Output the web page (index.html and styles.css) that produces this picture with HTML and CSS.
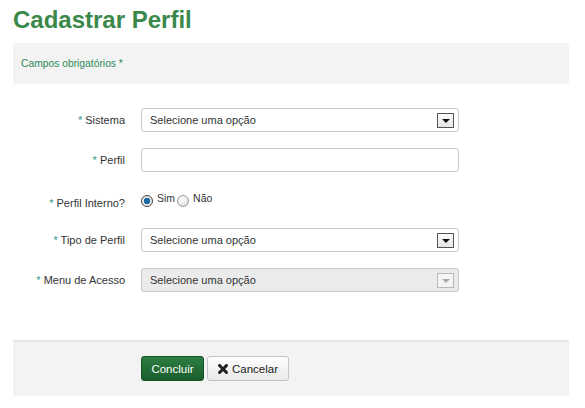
FILE: index.html
```html
<!DOCTYPE html>
<html lang="pt">
<head>
<meta charset="utf-8">
<title>Cadastrar Perfil</title>
<link rel="stylesheet" href="styles.css">
</head>
<body>
<div class="page">
  <h1 class="title">Cadastrar Perfil</h1>
  <div class="notice">Campos obrigatórios *</div>

  <form class="form">
    <div class="row">
      <label class="lbl"><span class="req">*</span> Sistema</label>
      <div class="select">
        <span class="select-text">Selecione uma opção</span>
        <span class="arrow"><span class="tri"></span></span>
      </div>
    </div>
    <div class="row">
      <label class="lbl"><span class="req">*</span> Perfil</label>
      <div class="input"></div>
    </div>
    <div class="row row-radio">
      <label class="lbl"><span class="req">*</span> Perfil Interno?</label>
      <div class="radios">
        <span class="radio checked"></span><span class="rtext">Sim</span>
        <span class="radio"></span><span class="rtext">Não</span>
      </div>
    </div>
    <div class="row">
      <label class="lbl"><span class="req">*</span> Tipo de Perfil</label>
      <div class="select">
        <span class="select-text">Selecione uma opção</span>
        <span class="arrow"><span class="tri"></span></span>
      </div>
    </div>
    <div class="row">
      <label class="lbl"><span class="req">*</span> Menu de Acesso</label>
      <div class="select disabled">
        <span class="select-text">Selecione uma opção</span>
        <span class="arrow"><span class="tri"></span></span>
      </div>
    </div>
  </form>

  <div class="actions">
    <button class="btn btn-primary" type="button">Concluir</button>
    <button class="btn btn-default" type="button">
      <svg class="xicon" width="10" height="10" viewBox="0 0 10 10"><path d="M1.6 1.6 L8.4 8.4 M8.4 1.6 L1.6 8.4" stroke="#222" stroke-width="3" stroke-linecap="square"/></svg>
      Cancelar
    </button>
  </div>
</div>
</body>
</html>
```
FILE: styles.css
```css
* { box-sizing: border-box; }
body {
  margin: 0;
  background: #fff;
  font-family: "Liberation Sans", Arial, sans-serif;
  color: #333;
}
.page {
  padding: 0 16px 0 13px;
}
.title {
  margin: 5px 0 8px;
  font-size: 24px;
  line-height: 30px;
  font-weight: bold;
  color: #3a894b;
}
.notice {
  height: 41px;
  background: #f3f3f3;
  border-radius: 2px;
  padding-left: 8px;
  display: flex;
  align-items: center;
  font-size: 10.3px;
  color: #2f8a5a;
}
.form {
  margin-top: 24px;
  display: flex;
  flex-direction: column;
  gap: 16px;
}
.row {
  display: flex;
  align-items: center;
  height: 24px;
}
.lbl {
  width: 112px;
  text-align: right;
  font-size: 11px;
  color: #333;
  margin-right: 16px;
}
.req { color: #2f9a8a; }
.select, .input {
  width: 318px;
  height: 24px;
  border: 1px solid #c8c8c8;
  border-radius: 3px;
  background: #fff;
  display: flex;
  align-items: center;
}
.select-text {
  flex: 1;
  padding-left: 8px;
  font-size: 11px;
  color: #333;
}
.arrow {
  width: 17px;
  height: 15px;
  margin-right: 4px;
  border: 1px solid #555;
  background: linear-gradient(#fafafa, #e6e6e6);
  display: flex;
  align-items: center;
  justify-content: center;
}
.tri {
  width: 0;
  height: 0;
  border-left: 4px solid transparent;
  border-right: 4px solid transparent;
  border-top: 4px solid #111;
  margin-top: 2px;
}
.select.disabled { background: #ebebeb; }
.select.disabled .arrow { border-color: #b8b8b8; background: #f4f4f4; }
.select.disabled .tri { border-top-color: #aaa; }
.row-radio { align-items: flex-start; padding-top: 4px; }
.row-radio .lbl { padding-top: 5px; }
.radios {
  display: flex;
  align-items: flex-start;
  font-size: 10.5px;
}
.radio {
  width: 12px;
  height: 12px;
  border-radius: 50%;
  margin-top: 3px;
  border: 1px solid #9a9a9a;
  background: radial-gradient(circle at 40% 35%, #fff, #d8d8d8);
}
.radio.checked {
  border: 1px solid #444;
  background: radial-gradient(circle, #1a6aa8 0 3px, #e8e8e8 3.5px);
}
.rtext {
  margin: 0 2px 0 4px;
  line-height: 12px;
  color: #333;
}
.actions {
  margin-top: 48px;
  height: 56px;
  border-top: 2px solid #e6e6e6;
  background: #f3f3f3;
  padding: 14px 0 0 128px;
  display: flex;
  align-items: flex-start;
  gap: 3px;
}
.btn {
  height: 25px;
  font-family: "Liberation Sans", Arial, sans-serif;
  font-size: 11.5px;
  border-radius: 3px;
  padding: 0 8px;
  display: flex;
  align-items: center;
  gap: 4px;
}
.btn-primary {
  width: 63px;
  justify-content: center;
  color: #fff;
  border: 1px solid #145226;
  background: linear-gradient(#2d7f43, #1a5c2c);
}
.btn-default {
  width: 82px;
  justify-content: center;
  color: #222;
  border: 1px solid #c4c4c4;
  background: linear-gradient(#fff, #e9e9e9);
}
.xicon { display: block; }
```
